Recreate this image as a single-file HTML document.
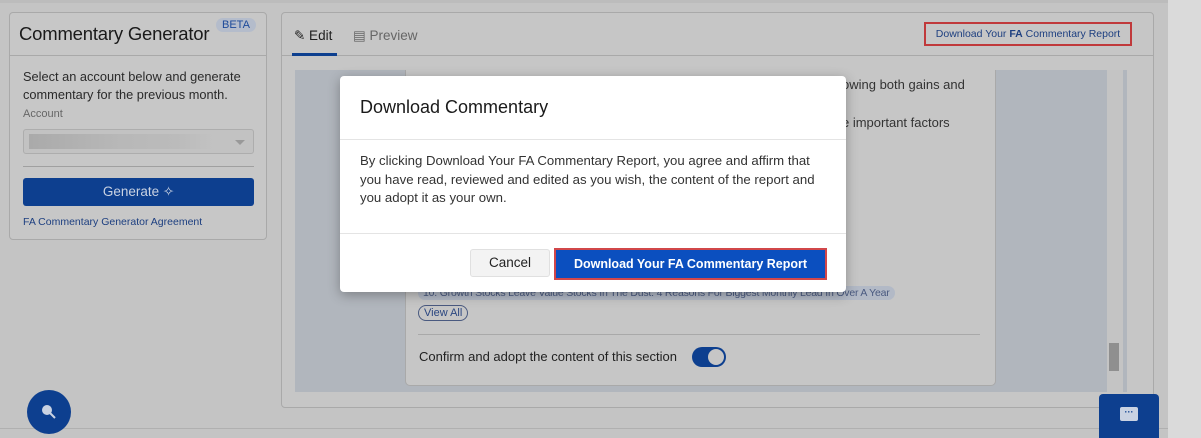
<!DOCTYPE html>
<html><head><meta charset="utf-8"><style>
*{box-sizing:border-box;margin:0;padding:0}
body{width:1201px;height:438px;overflow:hidden;background:#c4c4c4;font-family:"Liberation Sans",sans-serif;position:relative;color:#1e1e1e}
.a{position:absolute}
</style></head><body>
<div class="a" style="left:1168px;top:0;width:33px;height:438px;background:#dadada"></div>
<div class="a" style="left:0;top:0;width:1168px;height:3px;background:#bcbcbc"></div>
<div class="a" style="left:0;top:428px;width:1168px;height:1px;background:#b0b0b0"></div>
<!-- left card -->
<div class="a" style="left:9px;top:12px;width:258px;height:228px;border:1px solid #a9a9a9;border-radius:4px;background:#c7c7c7">
 <div style="height:43px;border-bottom:1px solid #a9a9a9;position:relative">
  <div class="a" style="left:9px;top:10px;font-size:18.5px;color:#1a1a1a;letter-spacing:-0.2px">Commentary Generator</div>
  <div class="a" style="left:206px;top:5px;font-size:11px;color:#1d4a9a;background:#b4bccb;border-radius:9px;padding:1px 6px">BETA</div>
 </div>
 <div class="a" style="left:13px;top:55px;font-size:12.8px;line-height:18px;color:#2a2a2a">Select an account below and generate<br>commentary for the previous month.</div>
 <div class="a" style="left:13px;top:95px;font-size:11px;color:#666">Account</div>
 <div class="a" style="left:13px;top:116px;width:231px;height:25px;border:1px solid #adadad;border-radius:3px;background:#c2c2c2">
  <div class="a" style="left:5px;top:4px;width:185px;height:15px;background:linear-gradient(90deg,#aaa,#b8b8b8 50%,#bbb 80%,#c2c2c2)"></div>
  <div class="a" style="right:8px;top:10px;border:5px solid transparent;border-top:5px solid #999"></div>
 </div>
 <div class="a" style="left:13px;top:153px;width:231px;height:1px;background:#a0a0a0"></div>
 <div class="a" style="left:13px;top:165px;width:231px;height:28px;background:#0d3f8f;border-radius:3px;color:#c9d2e2;font-size:13.5px;text-align:center;line-height:28px">Generate ✧</div>
 <div class="a" style="left:13px;top:203px;font-size:10.5px;color:#1d3f80">FA Commentary Generator Agreement</div>
</div>
<!-- left chat circle -->
<div class="a" style="left:27px;top:390px;width:44px;height:44px;border-radius:50%;background:#0d3f8f">
 <svg class="a" style="left:13px;top:13px" width="18" height="18" viewBox="0 0 18 18"><circle cx="7" cy="7" r="5" fill="#c9d2e2"/><path d="M10 10 l5 5" stroke="#c9d2e2" stroke-width="2"/></svg>
</div>
<!-- right panel -->
<div class="a" style="left:281px;top:12px;width:873px;height:396px;border:1px solid #a9a9a9;border-radius:4px;background:#c6c6c6">
 <div class="a" style="left:0;top:42px;width:871px;height:1px;background:#a9a9a9"></div>
 <div class="a" style="left:12px;top:15px;font-size:13.5px;color:#1e1e1e">✎ Edit</div>
 <div class="a" style="left:10px;top:40px;width:45px;height:3px;background:#0d3f8f"></div>
 <div class="a" style="left:71px;top:15px;font-size:13.5px;color:#666">▤ Preview</div>
 <div class="a" style="left:642px;top:9px;width:208px;height:24px;border:2px solid #c0393b;font-size:10.5px;color:#1d3f80;line-height:20px;text-align:center;white-space:nowrap">Download Your <b>FA</b> Commentary Report</div>
 <div class="a" style="left:13px;top:57px;width:832px;height:322px;background:#b1b6bd"></div>
 <div class="a" style="left:123px;top:57px;width:591px;height:316px;background:#c6c6c6;border:1px solid #a9a9a9;border-top:none;border-radius:0 0 5px 5px">
  <div class="a" style="left:436px;top:7px;font-size:13px;color:#333">owing both gains and</div>
  <div class="a" style="left:436px;top:45px;font-size:13px;color:#333">e important factors</div>
  <div class="a" style="left:12px;top:216px;font-size:10.5px;color:#4a5a80;background:#b2b9c6;border-radius:8px;padding:1px 5px;white-space:nowrap;letter-spacing:-0.2px">10. Growth Stocks Leave Value Stocks In The Dust: 4 Reasons For Biggest Monthly Lead In Over A Year</div>
  <div class="a" style="left:12px;top:235px;font-size:11px;color:#2a4680;border:1px solid #4a5a80;border-radius:8px;padding:1px 5px">View All</div>
  <div class="a" style="left:12px;top:264px;width:562px;height:1px;background:#a9a9a9"></div>
  <div class="a" style="left:13px;top:279px;font-size:13px;color:#222">Confirm and adopt the content of this section</div>
  <div class="a" style="left:286px;top:277px;width:34px;height:20px;border-radius:10px;background:#0d3f8f"><div class="a" style="right:2px;top:2px;width:16px;height:16px;border-radius:50%;background:#c6c6c6"></div></div>
 </div>
 <div class="a" style="left:825px;top:57px;width:16px;height:322px;background:#c4c4c4"></div>
 <div class="a" style="left:827px;top:330px;width:10px;height:28px;background:#8f8f8f"></div>
</div>
<!-- modal -->
<div class="a" style="left:340px;top:76px;width:506px;height:216px;background:#fff;border-radius:4px;box-shadow:0 3px 12px rgba(0,0,0,.3)">
 <div class="a" style="left:20px;top:21px;font-size:18px;color:#1a1a1a">Download Commentary</div>
 <div class="a" style="left:0;top:63px;width:506px;height:1px;background:#e4e4e4"></div>
 <div class="a" style="left:20px;top:76px;font-size:13.2px;line-height:18.5px;color:#333;width:486px;white-space:nowrap">By clicking Download Your FA Commentary Report, you agree and affirm that<br>you have read, reviewed and edited as you wish, the content of the report and<br>you adopt it as your own.</div>
 <div class="a" style="left:0;top:157px;width:506px;height:1px;background:#e4e4e4"></div>
 <div class="a" style="left:130px;top:173px;width:80px;height:28px;background:#f3f3f3;border:1px solid #e0e0e0;border-radius:3px;font-size:13.5px;text-align:center;line-height:26px;color:#222">Cancel</div>
 <div class="a" style="left:214px;top:172px;width:273px;height:32px;border:2px solid #d1474a;background:#0b4fbf;color:#fff;font-size:12.5px;font-weight:bold;text-align:center;line-height:28px">Download Your FA Commentary Report</div>
</div>
<!-- chat button -->
<div class="a" style="left:1099px;top:394px;width:60px;height:44px;background:#0d3f8f;border-radius:4px 4px 0 0">
 <div class="a" style="left:21px;top:13px;width:18px;height:14px;background:#c9d2e2;border-radius:2px;font-size:9px;color:#0d3f8f;text-align:center;line-height:10px;font-weight:bold">···</div>
</div>
</body></html>
